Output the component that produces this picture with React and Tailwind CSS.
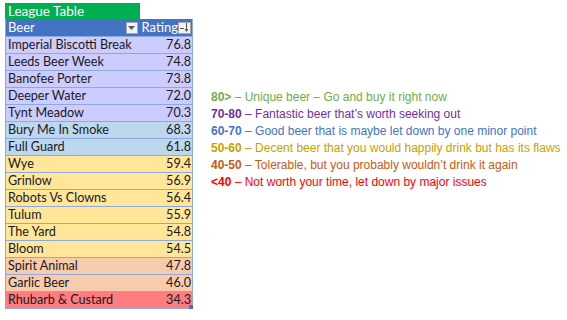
import React from "react";

const rows = [
  ["Imperial Biscotti Break", "76.8", "bg-[#CCCCFF]"],
  ["Leeds Beer Week", "74.8", "bg-[#CCCCFF]"],
  ["Banofee Porter", "73.8", "bg-[#CCCCFF]"],
  ["Deeper Water", "72.0", "bg-[#CCCCFF]"],
  ["Tynt Meadow", "70.3", "bg-[#CCCCFF]"],
  ["Bury Me In Smoke", "68.3", "bg-[#BDD7EE]"],
  ["Full Guard", "61.8", "bg-[#BDD7EE]"],
  ["Wye", "59.4", "bg-[#FFE699]"],
  ["Grinlow", "56.9", "bg-[#FFE699]"],
  ["Robots Vs Clowns", "56.4", "bg-[#FFE699]"],
  ["Tulum", "55.9", "bg-[#FFE699]"],
  ["The Yard", "54.8", "bg-[#FFE699]"],
  ["Bloom", "54.5", "bg-[#FFE699]"],
  ["Spirit Animal", "47.8", "bg-[#F8CBAD]"],
  ["Garlic Beer", "46.0", "bg-[#F8CBAD]"],
  ["Rhubarb & Custard", "34.3", "bg-[#FF7C80]"],
];

const legend = [
  ["80>", "Unique beer – Go and buy it right now", "text-[#70AD47]"],
  ["70-80", "Fantastic beer that’s worth seeking out", "text-[#7030A0]"],
  ["60-70", "Good beer that is maybe let down by one minor point", "text-[#4472C4]"],
  ["50-60", "Decent beer that you would happily drink but has its flaws", "text-[#C9A000]"],
  ["40-50", "Tolerable, but you probably wouldn’t drink it again", "text-[#C55A11]"],
  ["<40", "Not worth your time, let down by major issues", "text-[#FF0000]"],
];

function FilterButton() {
  return (
    <div className="w-[12px] h-[12px] bg-[#F2F2F2] border border-[#A6A6A6] flex items-center justify-center">
      <svg width="7" height="4" viewBox="0 0 7 4">
        <polygon points="0,0 7,0 3.5,4" fill="#595959" />
      </svg>
    </div>
  );
}

function SortButton() {
  return (
    <div className="w-[13px] h-[12px] bg-[#F2F2F2] border border-[#A6A6A6] flex items-center justify-center">
      <svg width="11" height="9" viewBox="0 0 11 9">
        <rect x="1" y="5" width="4" height="1" fill="#595959" />
        <rect x="7" y="0" width="1" height="8" fill="#595959" />
        <polygon points="5.5,6 9.5,6 7.5,9" fill="#595959" />
      </svg>
    </div>
  );
}

export default function App() {
  return (
    <div className="w-[567px] h-[320px] bg-white flex items-start">
      <div className="ml-[5px] mt-[3px] flex flex-col" style={{ fontFamily: "Lato, 'Open Sans', sans-serif" }}>
        <div className="w-[135px] h-[16px] bg-[#00B050] text-white text-[13.5px] leading-[16px] pl-[3px]">
          League Table
        </div>
        <div className="relative w-[188px] border-l border-r border-[#8EA9DB]">
          <div className="flex h-[18px] bg-[#4472C4] text-white text-[13px] border-b border-[#8EA9DB]">
            <div className="w-[133px] flex items-center justify-between pl-[2px] pr-[1px]">
              <span className="leading-[17px]">Beer</span>
              <FilterButton />
            </div>
            <div className="flex-1 flex items-center justify-between pl-[3px] pr-[1px]">
              <span className="leading-[17px]">Rating</span>
              <SortButton />
            </div>
          </div>
          {rows.map(([name, rating, bg]) => (
            <div key={name} className={`flex h-[17px] ${bg} border-b border-[#8EA9DB] text-[12.6px] text-[#1a1a1a] leading-[16px]`}>
              <div className="w-[133px] pl-[2px] whitespace-nowrap">{name}</div>
              <div className="flex-1 text-right pr-[1px]">{rating}</div>
            </div>
          ))}
          <div className="absolute right-[-1px] bottom-0 w-[4px] h-[4px] bg-[#4472C4]" />
        </div>
      </div>
      <div className="ml-[18px] mt-[89px] flex flex-col text-[12px] leading-[17px]" style={{ fontFamily: "'Liberation Sans', Arial, sans-serif" }}>
        {legend.map(([range, text, color]) => (
          <div key={range} className={`${color} whitespace-nowrap`}>
            <span className="font-bold">{range}</span> – {text}
          </div>
        ))}
      </div>
    </div>
  );
}
